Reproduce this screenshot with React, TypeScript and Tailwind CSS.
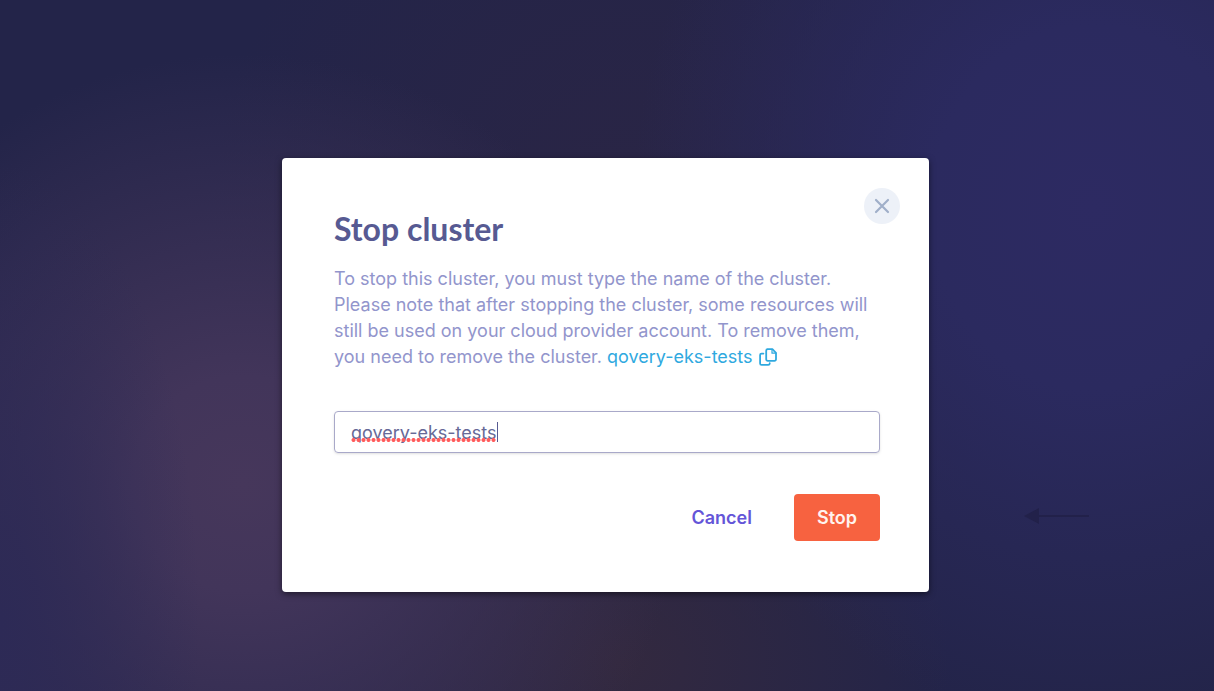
import { useState } from "react";

function CloseIcon() {
  return (
    <svg aria-hidden="true" width="16" height="16" viewBox="0 0 16 16" fill="none" stroke="currentColor" strokeWidth="2.2" strokeLinecap="round">
      <path d="M2 2l12 12M14 2L2 14" />
    </svg>
  );
}

function CopyIcon() {
  return (
    <svg aria-hidden="true" className="ml-1.5 inline-block align-[-3px]" width="18" height="18" viewBox="0 0 18 18" fill="none" stroke="currentColor" strokeWidth="1.8" strokeLinejoin="round" strokeLinecap="round">
      <path d="M8.2 1.2h5.2L17 4.8v6.5a1.5 1.5 0 0 1-1.5 1.5H8.7a1.5 1.5 0 0 1-1.5-1.5V2.7a1.5 1.5 0 0 1 1.5-1.5z" />
      <path d="M13 1.4v3.8h3.8" strokeWidth="1.2" />
      <path d="M4.4 5.6H2.6A1.5 1.5 0 0 0 1.1 7.1v8.3a1.5 1.5 0 0 0 1.5 1.5h6.6a1.5 1.5 0 0 0 1.5-1.5v-.2" />
    </svg>
  );
}

function BackArrow() {
  return (
    <svg aria-hidden="true" className="absolute top-[507px] left-[1024px] text-[#22214a]" width="66" height="18" viewBox="0 0 66 18" fill="currentColor">
      <path d="M0 9L15 1v16z" />
      <path d="M15 8h50v2H15z" />
    </svg>
  );
}

export default function App() {
  const [name, setName] = useState("qovery-eks-tests");

  return (
    <main className="relative flex min-h-screen items-start justify-center bg-[#232449] bg-[radial-gradient(ellipse_200px_460px_at_0%_90%,#2d2a56_0%,#2d2a5600_100%),radial-gradient(ellipse_440px_430px_at_20%_70%,#46375b_0%,#42355a_25%,#342e5500_100%),radial-gradient(ellipse_460px_520px_at_90%_30%,#2d2a62_0%,#2b2a5f_35%,#28275500_100%),radial-gradient(ellipse_330px_300px_at_51%_96%,#33293f_0%,#33293f00_100%),radial-gradient(ellipse_420px_440px_at_52%_32%,#2a2545_0%,#2a254500_100%)] pt-[158px] font-[Inter,sans-serif]">
      <BackArrow />
      <section
        role="dialog"
        aria-labelledby="dialog-title"
        className="relative mr-[3px] w-full max-w-[647px] rounded bg-white pt-[52px] pr-[49px] pb-[51px] pl-[52px] shadow-[0_2px_6px_rgba(0,0,0,0.5)]"
      >
        <button type="button" aria-label="Close" className="absolute top-[30px] right-[29px] flex size-9 items-center justify-center rounded-full bg-[#edf1f8] text-[#a0afc9]">
          <CloseIcon />
        </button>
        <h1 id="dialog-title" className="font-[Lato,sans-serif] text-[32px] leading-[38px] font-bold text-[#575a92]">
          Stop cluster
        </h1>
        <p className="mt-[18px] text-[18px] leading-[26px] text-[#9295cc]">
          To stop this cluster, you must type the name of the cluster. Please note that after stopping the cluster, some resources will still be used on your cloud provider account. To remove them, you need to remove the cluster.{" "}
          <button type="button" className="text-[#2fa9df]">
            qovery-eks-tests
            <CopyIcon />
          </button>
        </p>
        <form onSubmit={(event) => event.preventDefault()}>
          <div className="relative mt-[41px]">
            <input
              type="text"
              aria-label="Cluster name"
              value={name}
              onChange={(event) => setName(event.target.value)}
              className="block h-[42px] w-full rounded border border-[#a9a9c9] px-4 text-[18px] text-[#666997] shadow-sm outline-none"
            />
            <span aria-hidden="true" className="absolute top-[27px] left-[17px] h-1 w-[145px] bg-[radial-gradient(circle,#ff5c5c_50%,transparent_75%)] bg-size-[5px_4px]" />
            <span aria-hidden="true" className="absolute top-[11px] left-[163px] h-5 w-px bg-[#575a92]" />
          </div>
          <div className="mt-[41px] flex items-center justify-end gap-5">
            <button type="button" className="h-[47px] px-[22px] text-[18px] font-semibold text-[#6455d8]">
              Cancel
            </button>
            <button type="submit" className="h-[47px] rounded bg-[#f76240] px-[23px] text-[18px] font-semibold text-[#fff3ef]">
              Stop
            </button>
          </div>
        </form>
      </section>
    </main>
  );
}
